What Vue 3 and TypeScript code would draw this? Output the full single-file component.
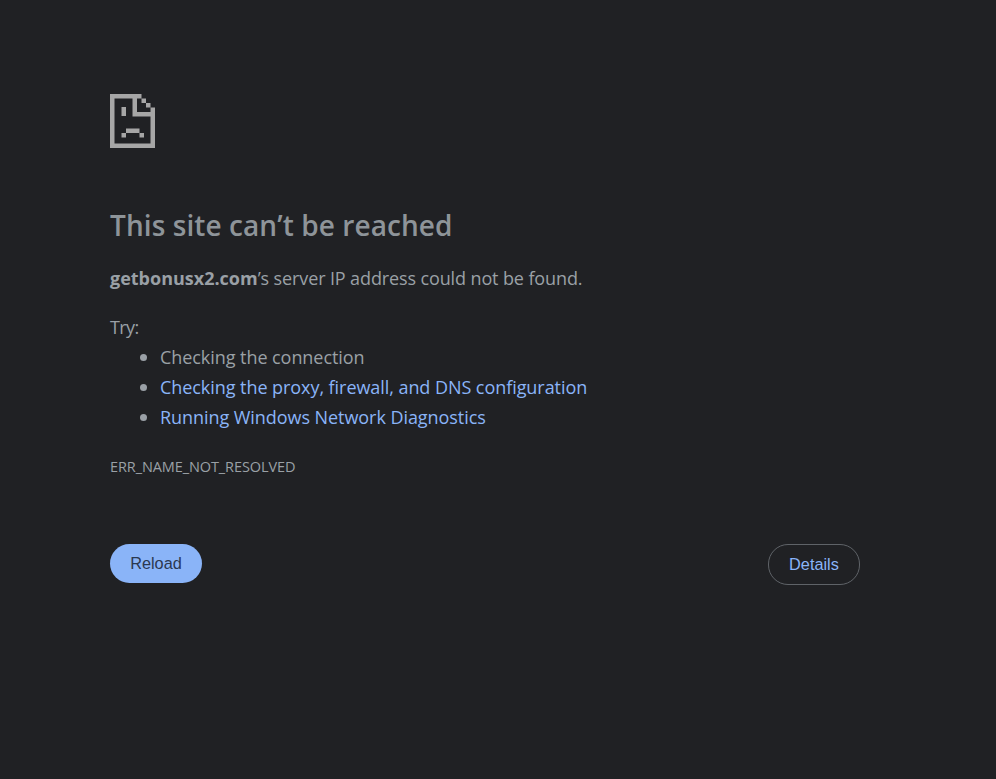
<script setup lang="ts">
const tips = [
  { text: 'Checking the connection', link: false },
  { text: 'Checking the proxy, firewall, and DNS configuration', link: true },
  { text: 'Running Windows Network Diagnostics', link: true },
]
</script>

<template>
  <main class="page">
    <svg class="icon" viewBox="0 0 45 54" width="45" height="54" aria-hidden="true">
      <path fill="#a6a6a6" d="M0 0H31.5V4.5H27V18H45V54H0ZM4.5 4.5V49.5H40.5V22.5H22.5V4.5ZM31.5 4.5H36V9H31.5ZM36 9H40.5V13.5H36ZM40.5 13.5H45V18H40.5ZM11.5 13H16V22H11.5ZM16 34.5H29.5V39H16ZM11.5 39H16V43.5H11.5ZM29.5 39H34V43.5H29.5Z" fill-rule="evenodd" />
    </svg>
    <h1 class="title">This site can’t be reached</h1>
    <p class="summary"><strong>getbonusx2.com</strong>’s server IP address could not be found.</p>
    <p class="try">Try:</p>
    <ul class="tips">
      <li v-for="tip in tips" :key="tip.text">
        <a v-if="tip.link" href="#" class="link">{{ tip.text }}</a>
        <span v-else>{{ tip.text }}</span>
      </li>
    </ul>
    <div class="code">ERR_NAME_NOT_RESOLVED</div>
    <div class="actions">
      <button class="reload" type="button">Reload</button>
      <button class="details" type="button">Details</button>
    </div>
  </main>
</template>

<style>
html, body { background: #202124; }
</style>

<style scoped>
.page {
  box-sizing: border-box;
  width: 996px;
  min-height: 779px;
  padding: 94px 136px 0 110px;
  background: #202124;
  color: #9aa0a6;
  font-family: "Open Sans", "Noto Sans", sans-serif;
  font-size: 18px;
  display: flex;
  flex-direction: column;
}
.icon { display: block; }
.title {
  margin: 60px 0 0;
  font-size: 28px;
  line-height: 34px;
  font-weight: 600;
  letter-spacing: 0.08px;
  color: #8e9499;
}
.summary {
  margin: 24px 0 0;
  line-height: 24px;
  letter-spacing: -0.12px;
}
.summary strong { font-weight: 700; letter-spacing: 0; }
.try { margin: 25px 0 0; line-height: 24px; letter-spacing: -0.6px; }
.tips {
  margin: 3px 0 0;
  padding: 0 0 0 50px;
  line-height: 30px;
  list-style: none;
  letter-spacing: -0.06px;
}
.tips li { position: relative; }
.tips li::before {
  content: "";
  position: absolute;
  left: -20px;
  top: 11.5px;
  width: 7px;
  height: 7px;
  border-radius: 50%;
  background: #9aa0a6;
}
.link { color: #8ab4f8; text-decoration: none; }
.code {
  margin-top: 25px;
  font-size: 14.5px;
  line-height: 20px;
  letter-spacing: -0.1px;
}
.actions {
  margin-top: 67px;
  display: flex;
  justify-content: space-between;
  align-items: flex-start;
}
button {
  font-family: "Liberation Sans", Arial, sans-serif;
  font-size: 16.3px;
  border-radius: 20px;
  cursor: pointer;
  box-sizing: border-box;
}
.reload {
  width: 92px;
  height: 39px;
  background: #8ab4f8;
  color: #2a3850;
  border: 0;
}
.details {
  width: 92px;
  height: 41px;
  background: transparent;
  color: #8ab4f8;
  border: 1px solid #5f6368;
}
</style>
